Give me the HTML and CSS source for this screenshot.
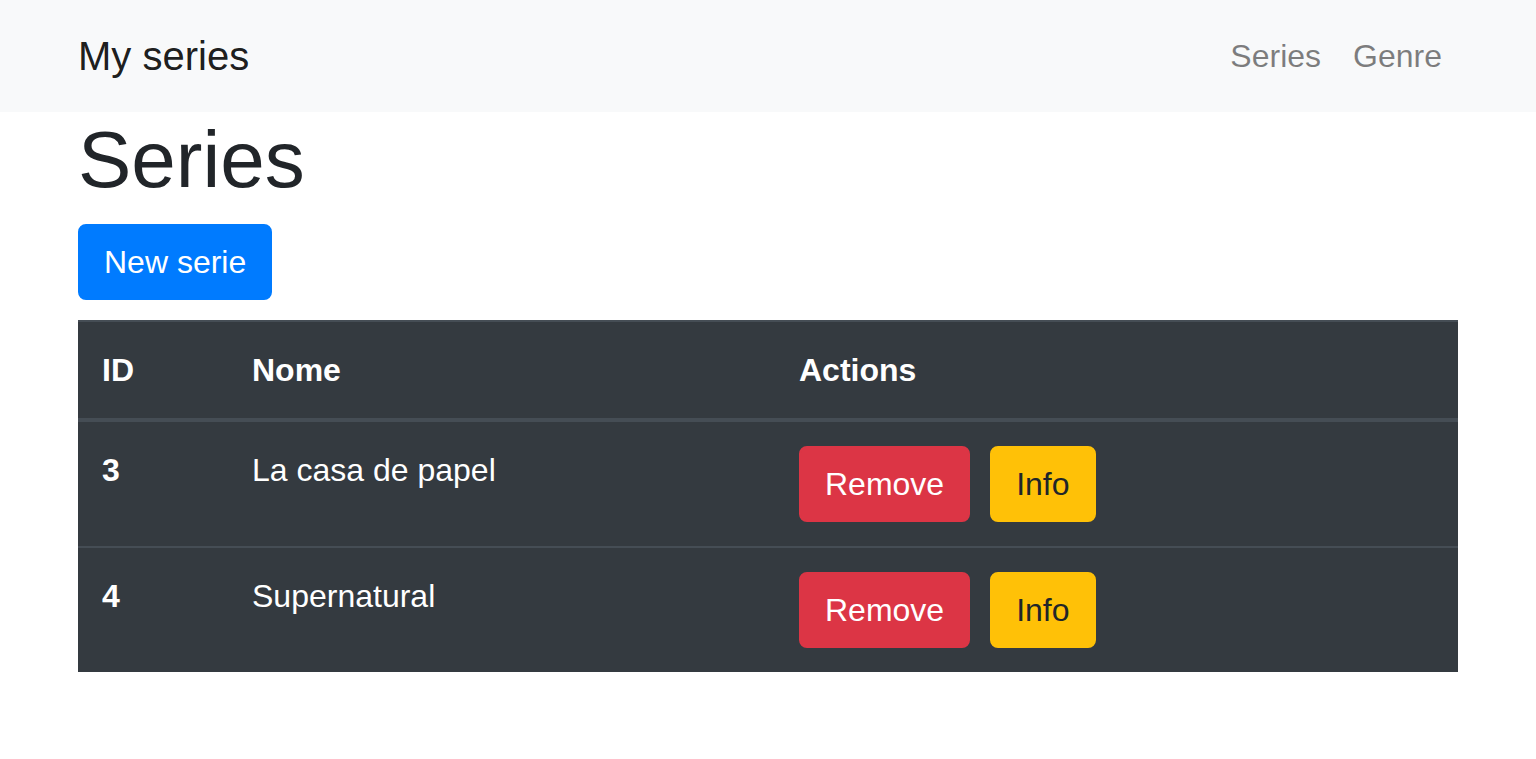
FILE: index.html
```html
<!DOCTYPE html>
<html lang="en">
<head>
<meta charset="utf-8">
<title>My series</title>
<link rel="stylesheet" href="styles.css">
</head>
<body>
<nav class="navbar">
  <div class="nav-inner">
    <a class="brand" href="#">My series</a>
    <ul class="nav-links">
      <li><a class="nav-link" href="#">Series</a></li>
      <li><a class="nav-link" href="#">Genre</a></li>
    </ul>
  </div>
</nav>
<main class="container">
  <h1 class="title">Series</h1>
  <div class="toolbar"><a class="btn btn-primary" href="#">New serie</a></div>
  <table class="table">
    <thead>
      <tr>
        <th class="col-id">ID</th>
        <th class="col-name">Nome</th>
        <th class="col-actions">Actions</th>
      </tr>
    </thead>
    <tbody>
      <tr>
        <th>3</th>
        <td>La casa de papel</td>
        <td><div class="actions"><a class="btn btn-danger" href="#">Remove</a><a class="btn btn-warning" href="#">Info</a></div></td>
      </tr>
      <tr>
        <th>4</th>
        <td>Supernatural</td>
        <td><div class="actions"><a class="btn btn-danger" href="#">Remove</a><a class="btn btn-warning" href="#">Info</a></div></td>
      </tr>
    </tbody>
  </table>
</main>
</body>
</html>
```

FILE: styles.css
```css
* { box-sizing: border-box; }
html, body { margin: 0; padding: 0; }
body {
  font-family: "Liberation Sans", Arial, sans-serif;
  font-size: 32px;
  line-height: 1.5;
  color: #212529;
  background: #fff;
}
a { text-decoration: none; }

.navbar {
  background: #f8f9fa;
  padding: 16px 32px;
}
.nav-inner {
  max-width: 1440px;
  margin: 0 auto;
  padding: 0 30px;
  display: flex;
  align-items: center;
  justify-content: space-between;
}
.brand {
  font-size: 40px;
  line-height: 60px;
  padding: 10px 0;
  color: rgba(0, 0, 0, 0.9);
}
.nav-links {
  list-style: none;
  margin: 0;
  padding: 0;
  display: flex;
}
.nav-link {
  display: block;
  padding: 16px 16px;
  line-height: 48px;
  color: rgba(0, 0, 0, 0.5);
}

.container {
  max-width: 1440px;
  margin: 0 auto;
  padding: 0 30px;
}
.title {
  margin: 0 0 16px;
  font-size: 80px;
  font-weight: 500;
  line-height: 1.2;
}
.toolbar {
  display: flex;
  margin-bottom: 20px;
}
.btn {
  display: inline-block;
  padding: 12px 24px;
  font-size: 32px;
  line-height: 48px;
  border: 2px solid transparent;
  border-radius: 8px;
  text-align: center;
}
.btn-primary { background: #007bff; border-color: #007bff; color: #fff; }
.btn-danger { background: #dc3545; border-color: #dc3545; color: #fff; }
.btn-warning { background: #ffc107; border-color: #ffc107; color: #212529; }

.table {
  width: 100%;
  border-collapse: collapse;
  background: #343a40;
  color: #fff;
}
.table th, .table td {
  padding: 24px;
  vertical-align: top;
  text-align: left;
  border-top: 2px solid #454d55;
}
.table th { font-weight: 700; }
.table thead th {
  vertical-align: bottom;
  border-bottom: 4px solid #454d55;
}
.col-id { width: 150px; }
.col-name { width: 547px; }
.actions {
  display: flex;
  gap: 20px;
}
```
